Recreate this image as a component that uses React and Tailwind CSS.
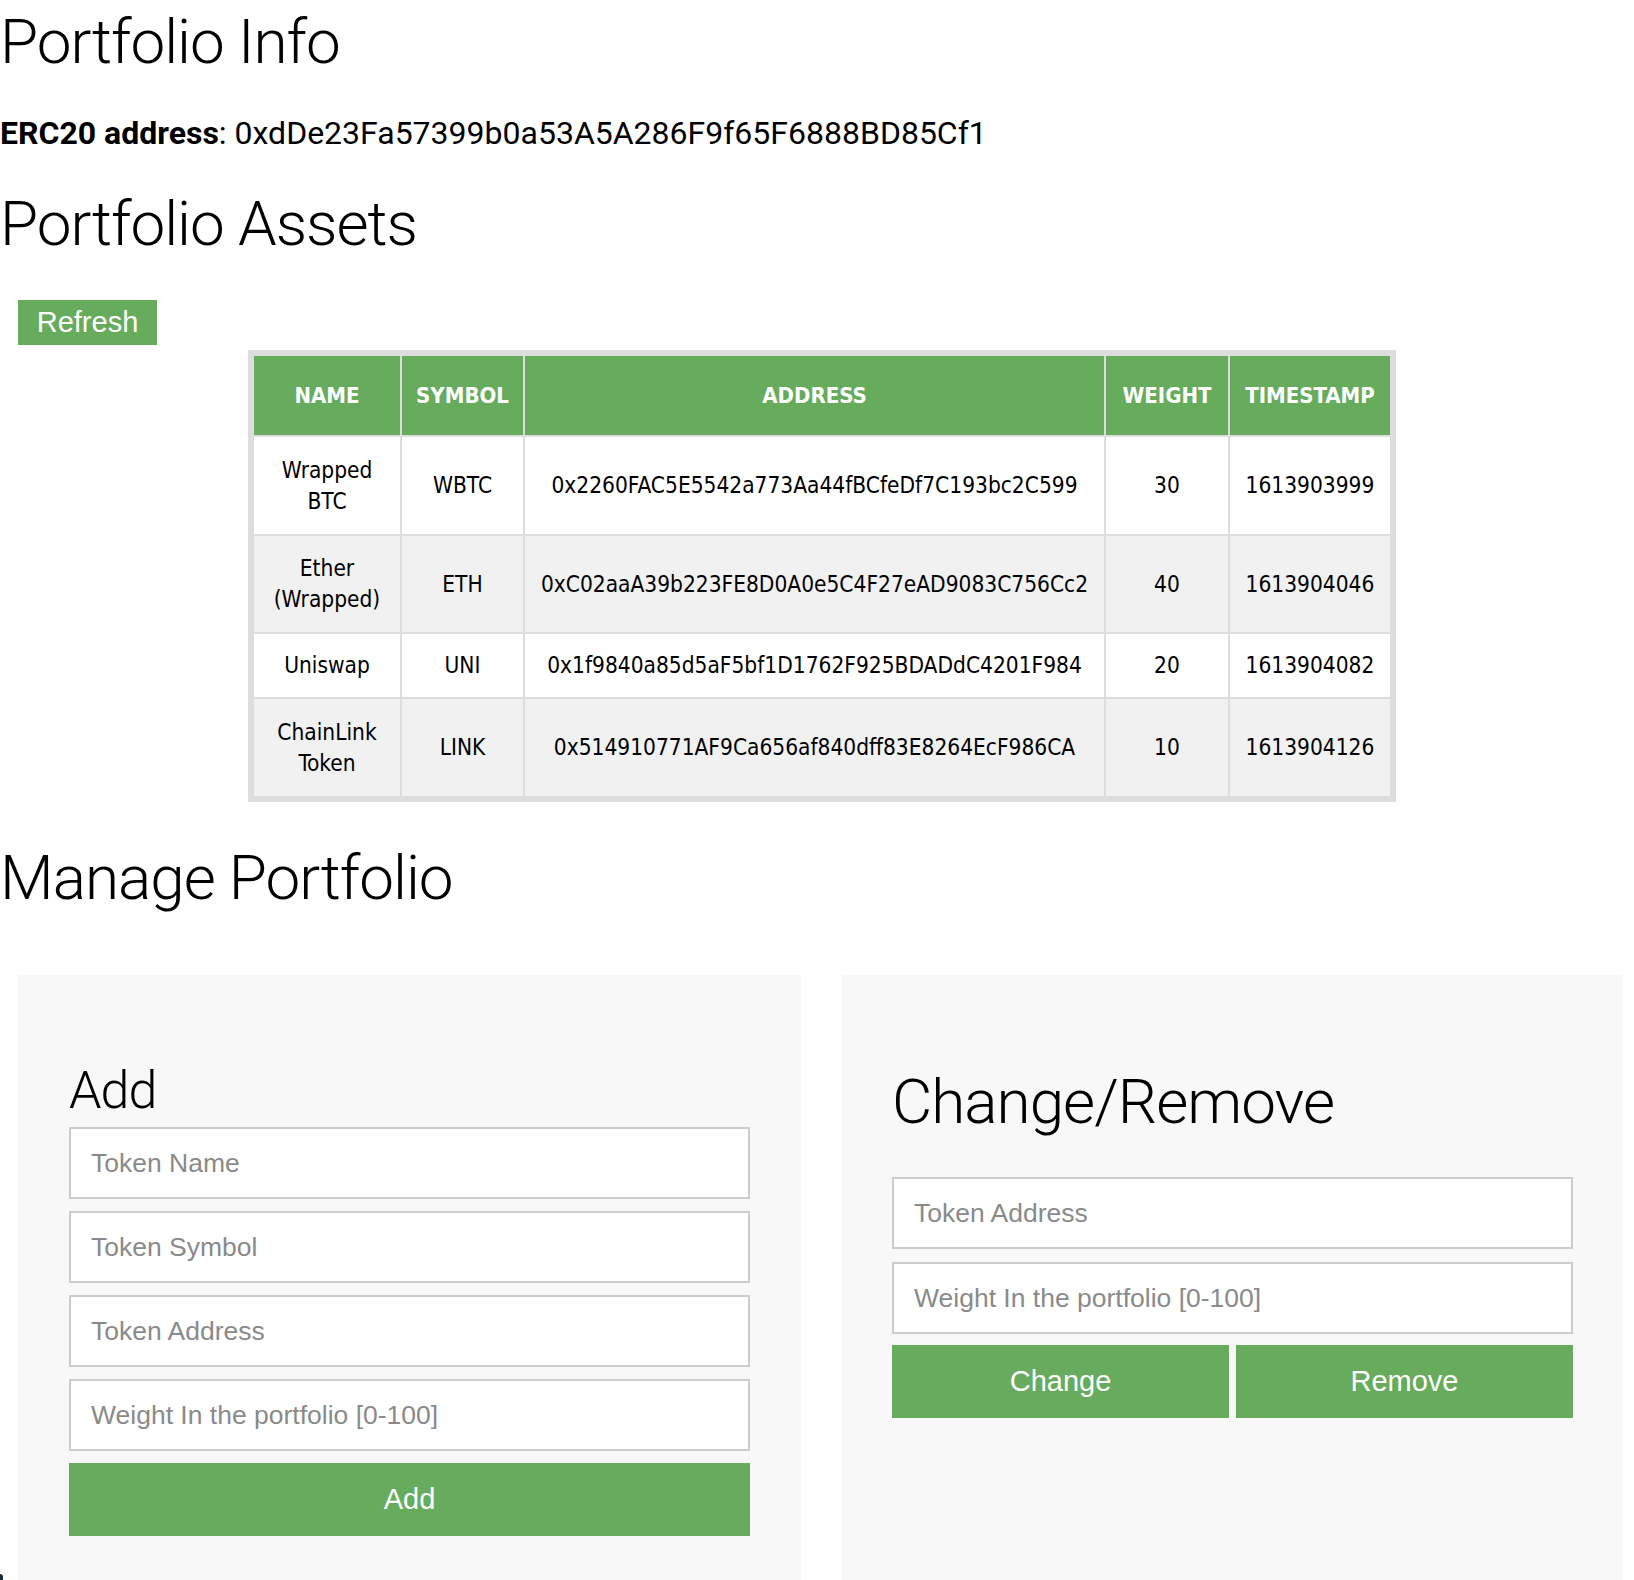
export default function App() {
  const rows = [
    { name: ['Wrapped', 'BTC'], symbol: 'WBTC', address: '0x2260FAC5E5542a773Aa44fBCfeDf7C193bc2C599', weight: '30', ts: '1613903999', h: 'h-[97px]', bg: 'bg-white' },
    { name: ['Ether', '(Wrapped)'], symbol: 'ETH', address: '0xC02aaA39b223FE8D0A0e5C4F27eAD9083C756Cc2', weight: '40', ts: '1613904046', h: 'h-[96px]', bg: 'bg-[#f1f1f1]' },
    { name: ['Uniswap'], symbol: 'UNI', address: '0x1f9840a85d5aF5bf1D1762F925BDADdC4201F984', weight: '20', ts: '1613904082', h: 'h-[63px]', bg: 'bg-white' },
    { name: ['ChainLink', 'Token'], symbol: 'LINK', address: '0x514910771AF9Ca656af840dff83E8264EcF986CA', weight: '10', ts: '1613904126', h: 'h-[97px]', bg: 'bg-[#f1f1f1]' },
  ];
  const heads = [
    { t: 'Name', w: 'w-[146px]' },
    { t: 'Symbol', w: 'w-[121px]' },
    { t: 'Address', w: 'w-[579px]' },
    { t: 'Weight', w: 'w-[122px]' },
    { t: 'Timestamp', w: 'w-[160px]' },
  ];
  const inputCls =
    "block w-full h-[72px] border-2 border-[#cccccc] bg-white pl-[20px] text-[26.5px] text-[#333] font-['Liberation_Sans',Arial,sans-serif] placeholder:text-[#8a8a8a] outline-none";
  const btnCls =
    "flex items-center justify-center h-[73px] bg-[#66ac5c] text-white text-[29px] font-['Liberation_Sans',Arial,sans-serif]";

  return (
    <div className="relative w-[1634px] h-[1580px] overflow-hidden bg-white text-black font-['Roboto',sans-serif]">
      <h1 className="pt-[10px] text-[62px] leading-[64px] font-light tracking-[-1px]">Portfolio Info</h1>
      <p className="mt-[41px] text-[32px] leading-[36px]">
        <span className="font-bold">ERC20 address</span>: 0xdDe23Fa57399b0a53A5A286F9f65F6888BD85Cf1
      </p>
      <h2 className="mt-[41px] text-[62px] leading-[64px] font-light tracking-[-1px]">Portfolio Assets</h2>

      <div className="mt-[44px] ml-[18px]">
        <button className="flex items-center justify-center h-[45px] w-[139px] bg-[#66ac5c] text-white text-[29px] font-['Liberation_Sans',Arial,sans-serif]">
          Refresh
        </button>
      </div>

      <div className="mt-[5px] ml-[248px] w-[1148px] bg-[#dddddd] p-[4px]">
        <table className="table-fixed w-[1140px] border-separate border-spacing-[2px] text-[22.5px] leading-[31px] text-black font-['DejaVu_Sans_Condensed','DejaVu_Sans',sans-serif] font-stretch-condensed">
          <thead>
            <tr>
              {heads.map((h) => (
                <th key={h.t} className={`${h.w} h-[79px] bg-[#66ac5c] text-white text-[22px] font-bold uppercase text-center align-middle px-1`}>
                  {h.t}
                </th>
              ))}
            </tr>
          </thead>
          <tbody>
            {rows.map((r) => (
              <tr key={r.symbol}>
                <td className={`${r.h} ${r.bg} text-center align-middle px-1`}>
                  {r.name.map((n, i) => (
                    <span key={i} className="block">{n}</span>
                  ))}
                </td>
                <td className={`${r.bg} text-center align-middle px-1`}>{r.symbol}</td>
                <td className={`${r.bg} text-center align-middle px-1`}>{r.address}</td>
                <td className={`${r.bg} text-center align-middle px-1`}>{r.weight}</td>
                <td className={`${r.bg} text-center align-middle px-1`}>{r.ts}</td>
              </tr>
            ))}
          </tbody>
        </table>
      </div>

      <h2 className="mt-[44px] text-[62px] leading-[64px] font-light tracking-[-1px]">Manage Portfolio</h2>

      <div className="mt-[65px] flex gap-[41px] pl-[18px]">
        <div className="w-[783px] h-[606px] bg-[#f8f8f8] px-[51px] pt-[88px]">
          <h3 className="text-[52px] leading-[56px] font-light tracking-[-1px]">Add</h3>
          <div className="mt-[8px] flex flex-col gap-[12px]">
            <input className={inputCls} placeholder="Token Name" />
            <input className={inputCls} placeholder="Token Symbol" />
            <input className={inputCls} placeholder="Token Address" />
            <input className={inputCls} placeholder="Weight In the portfolio [0-100]" />
            <button className={btnCls}>Add</button>
          </div>
        </div>
        <div className="w-[781px] h-[606px] bg-[#f8f8f8] px-[50px] pt-[95px]">
          <h3 className="text-[62px] leading-[64px] font-light tracking-[-1px]">Change/Remove</h3>
          <div className="mt-[43px] flex flex-col gap-[13px]">
            <input className={inputCls} placeholder="Token Address" />
            <input className={inputCls} placeholder="Weight In the portfolio [0-100]" />
            <div className="grid grid-cols-2 gap-[7px] -mt-[2px]">
              <button className={btnCls}>Change</button>
              <button className={btnCls}>Remove</button>
            </div>
          </div>
        </div>
      </div>

      <div className="absolute left-0 bottom-0 w-[3px] h-[6px] bg-[#1c2b3c] rounded-tr-[3px]" />
    </div>
  );
}
